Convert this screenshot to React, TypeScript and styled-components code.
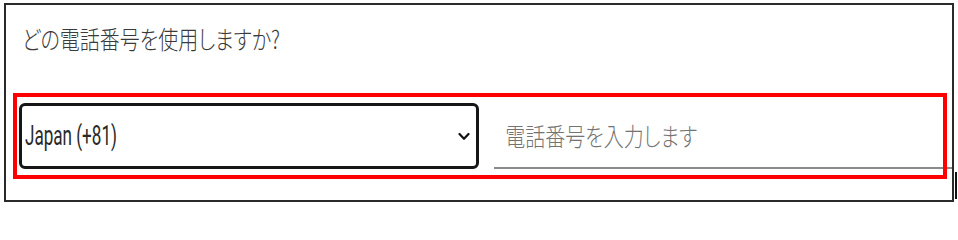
import React from "react";
import styled, { createGlobalStyle } from "styled-components";

const GlobalStyle = createGlobalStyle`
  html, body {
    margin: 0;
    padding: 0;
    background: #ffffff;
  }
  body {
    font-family: "Noto Sans CJK JP", "Noto Sans", sans-serif;
  }
`;

const Page = styled.div`
  display: flex;
  align-items: flex-start;
  padding: 3px 0 0 4px;
`;

const Card = styled.section`
  position: relative;
  box-sizing: border-box;
  width: 950px;
  height: 199px;
  border: 2px solid #2a2a2a;
  background: #ffffff;
  display: flex;
  flex-direction: column;
`;

const Heading = styled.h2`
  margin: 17px 0 0 0;
  padding-left: 16px;
  font-family: "Noto Sans CJK JP", sans-serif;
  font-feature-settings: "palt" 1;
  font-weight: 300;
  font-size: 25px;
  line-height: 32px;
  color: #3a3a3a;
  white-space: nowrap;
`;

const HeadingText = styled.span`
  display: inline-block;
  transform: scaleX(0.8);
  transform-origin: left center;
`;

const Row = styled.div`
  display: flex;
  align-items: stretch;
  gap: 15px;
  margin-top: 49px;
  padding-left: 13px;
  height: 66px;
`;

const CountrySelect = styled.button`
  box-sizing: border-box;
  flex: 0 0 460px;
  display: flex;
  align-items: center;
  justify-content: space-between;
  padding: 0 6px 0 3px;
  border: 3px solid #161616;
  border-radius: 6px;
  background: #ffffff;
  cursor: pointer;
  overflow: hidden;
`;

const SelectLabel = styled.span`
  display: inline-block;
  font-family: Roboto, "Liberation Sans", sans-serif;
  font-weight: 400;
  font-size: 28px;
  line-height: 32px;
  color: #2a2a2a;
  transform: scaleX(0.61);
  transform-origin: left center;
  white-space: nowrap;
`;

const Chevron = styled.svg`
  width: 12px;
  height: 9px;
  flex: 0 0 auto;
`;

const PhoneField = styled.label`
  box-sizing: border-box;
  flex: 1 1 auto;
  min-width: 0;
  display: flex;
  align-items: center;
  border-bottom: 2px solid #8a8a8a;
  overflow: hidden;
`;

const PhoneInput = styled.input`
  box-sizing: border-box;
  flex: 0 0 auto;
  width: 125%;
  height: 40px;
  border: none;
  padding: 0 0 0 14px;
  background: transparent;
  outline: none;
  font-family: "Noto Sans CJK JP", sans-serif;
  font-feature-settings: "palt" 1;
  font-weight: 300;
  font-size: 25px;
  color: #333333;
  transform: scaleX(0.8);
  transform-origin: left center;
  &::placeholder {
    color: #737373;
  }
`;

const Highlight = styled.div`
  position: absolute;
  left: 7px;
  top: 88px;
  width: 934px;
  height: 86px;
  box-sizing: border-box;
  border: 4px solid #ff0000;
  pointer-events: none;
`;

const EdgeMark = styled.span`
  flex: 0 0 auto;
  width: 2px;
  height: 27px;
  margin: 169px 0 0 1px;
  background: #111111;
`;

export default function App() {
  return (
    <>
      <GlobalStyle />
      <Page>
        <Card>
          <Heading>
            <HeadingText>どの電話番号を使用しますか?</HeadingText>
          </Heading>
          <Row>
            <CountrySelect type="button" aria-label="国">
              <SelectLabel>Japan (+81)</SelectLabel>
              <Chevron viewBox="0 0 12 9" aria-hidden="true">
                <path
                  d="M1.5 2 L6 6.8 L10.5 2"
                  fill="none"
                  stroke="#111"
                  strokeWidth="2.2"
                  strokeLinecap="round"
                  strokeLinejoin="round"
                />
              </Chevron>
            </CountrySelect>
            <PhoneField>
              <PhoneInput type="tel" placeholder="電話番号を入力します" />
            </PhoneField>
          </Row>
          <Highlight />
        </Card>
        <EdgeMark />
      </Page>
    </>
  );
}
